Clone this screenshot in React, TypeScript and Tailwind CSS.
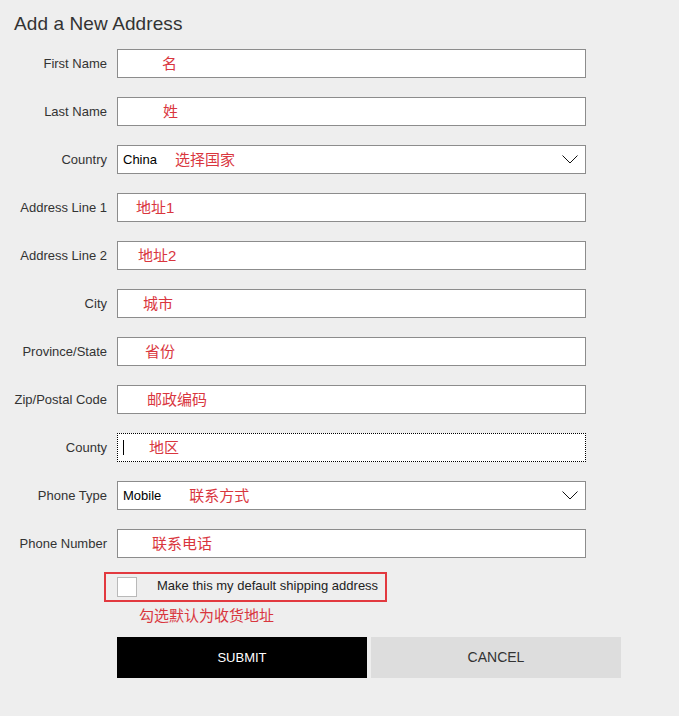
import React from 'react';

type Row = {
  label: string;
  value?: string;
  note: string;
  noteClass: string;
  select?: boolean;
  focused?: boolean;
};

// offsets of the red notes are taken from the screenshot, they differ per row
const rows: Row[] = [
  { label: 'First Name', note: '名', noteClass: 'ml-[44px]' },
  { label: 'Last Name', note: '姓', noteClass: 'ml-[45px]' },
  { label: 'Country', value: 'China', note: '选择国家', noteClass: 'ml-[18px]', select: true },
  { label: 'Address Line 1', note: '地址1', noteClass: 'ml-[18px]' },
  { label: 'Address Line 2', note: '地址2', noteClass: 'ml-[20px]' },
  { label: 'City', note: '城市', noteClass: 'ml-[25px]' },
  { label: 'Province/State', note: '省份', noteClass: 'ml-[27px]' },
  { label: 'Zip/Postal Code', note: '邮政编码', noteClass: 'ml-[29px]' },
  { label: 'County', note: '地区', noteClass: 'ml-[25px]', focused: true },
  { label: 'Phone Type', value: 'Mobile', note: '联系方式', noteClass: 'ml-[28px]', select: true },
  { label: 'Phone Number', note: '联系电话', noteClass: 'ml-[34px]' },
];

const Chevron = () => (
  <svg width="16" height="9" viewBox="0 0 16 9" className="absolute right-[7px] top-[9px]">
    <path d="M0.5 0.5 L8 8 L15.5 0.5" fill="none" stroke="#111" strokeWidth="1" />
  </svg>
);

const Field: React.FC<{ row: Row }> = ({ row }) => {
  const border = row.focused
    ? 'border border-dotted border-black'
    : 'border border-[#8c8c8c]';
  return (
    <div className={`relative ml-[10px] flex h-[29px] w-[469px] items-center bg-white ${border}`}>
      {row.focused && <span className="ml-[5px] h-[15px] w-px bg-black" />}
      {row.value && <span className="ml-[5px] text-[13px] text-black">{row.value}</span>}
      <span className={`${row.noteClass} mt-px text-[15px] text-[#d9363e]`}>{row.note}</span>
      {row.select && <Chevron />}
    </div>
  );
};

export default function App() {
  return (
    <div className="min-h-[716px] w-[679px] bg-[#eeeeee] font-['Liberation_Sans','Noto_Sans_CJK_SC',sans-serif] text-[#333]">
      <h2 className="pl-[14px] pt-[13px] text-[19px] leading-[22px] tracking-[0.1px] text-[#333]">Add a New Address</h2>

      <div className="mt-[14px] flex flex-col gap-[19px]">
        {rows.map((row) => (
          <div key={row.label} className="flex items-center">
            <label className="w-[107px] text-right text-[13px] text-[#333]">{row.label}</label>
            <Field row={row} />
          </div>
        ))}
      </div>

      <div className="ml-[104px] mt-[14px] flex h-[30px] w-[283px] items-center border-2 border-[#e2393f]">
        <span className="ml-[11px] h-[20px] w-[20px] border border-[#b9b9b9] bg-white" />
        <span className="ml-[20px] -mt-[3px] text-[13px] text-[#222]">Make this my default shipping address</span>
      </div>

      <div className="ml-[139px] mt-[4px] text-[15px] leading-[20px] text-[#d9363e]">勾选默认为收货地址</div>

      <div className="ml-[117px] mt-[11px] flex gap-[4px]">
        <button className="h-[41px] w-[250px] bg-black text-[13px] text-white">SUBMIT</button>
        <button className="h-[41px] w-[250px] bg-[#dddddd] text-[14px] text-[#333]">CANCEL</button>
      </div>
    </div>
  );
}
